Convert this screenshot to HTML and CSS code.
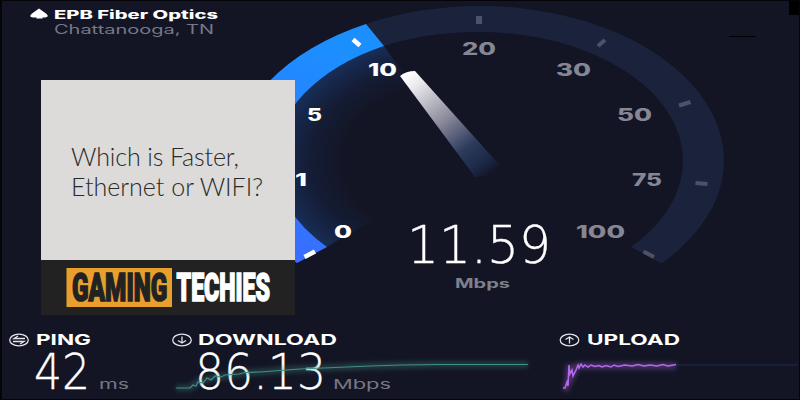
FILE: index.html
```
<!DOCTYPE html>
<html lang="en">
<head>
<meta charset="utf-8">
<title>Which is Faster, Ethernet or WIFI?</title>
<link rel="stylesheet" href="styles.css">
</head>
<body>
<main class="screen">
  <section class="test">
    <svg class="gauge" viewBox="0 0 800 320" role="img" aria-label="Speed gauge">
      <defs>
        <linearGradient id="arc" x1="0" y1="1" x2="0.25" y2="0">
          <stop offset="0" stop-color="#3c69ff"/><stop offset="1" stop-color="#1c8fff"/>
        </linearGradient>
        <linearGradient id="needle" gradientUnits="userSpaceOnUse" x1="408" y1="73" x2="488" y2="176">
          <stop offset="0" stop-color="#fff"/><stop offset=".12" stop-color="#e8e7ec"/><stop offset=".45" stop-color="#8b8b9b"/>
          <stop offset=".73" stop-color="#2c3a5c"/><stop offset=".9" stop-color="#1b2845"/><stop offset="1" stop-color="#141526"/>
        </linearGradient>
        <radialGradient id="glow" gradientUnits="userSpaceOnUse" cx="0" cy="0" r="1" gradientTransform="translate(479 161) scale(204 129)">
          <stop offset=".66" stop-color="#1b4fa8" stop-opacity="0"/><stop offset=".82" stop-color="#1b4fa8" stop-opacity=".12"/><stop offset="1" stop-color="#2361c4" stop-opacity=".32"/>
        </radialGradient>
      </defs>
      <path fill="#1b233c" d="M366 24A245 155 0 0 1 479 6A245 155 0 0 1 724 161A245 155 0 0 1 661.500 263.500L631 247A204 129 0 0 0 683 161A204 129 0 0 0 479 32A204 129 0 0 0 384 46Z"/>
      <path fill="url(#glow)" d="M327 247A204 129 0 0 1 275 161A204 129 0 0 1 384 46L400 69L479 161L343 237Z"/>
      <path fill="url(#arc)" d="M297 263A245 155 0 0 1 234 161A245 155 0 0 1 366 24L384 46A204 129 0 0 0 275 161A204 129 0 0 0 327 247Z"/>
      <g stroke="#fff" stroke-width="4.500">
        <path d="M353 39.500L360 45.500"/><path d="M304.500 257L315 251.500"/>
      </g>
      <g stroke="#4d5268">
        <path stroke-width="6" d="M479 16V24"/><path stroke-width="4" d="M605 40L598 46M690.500 102L679 105.500M707.500 184L695.500 183M643.500 251.500L654 257"/>
      </g>
      <path fill="url(#needle)" d="M400 76Q406 71 415 71L504 170Q490 176 475 177Z"/>
      <g class="tick active">
        <text x="334" y="238" textLength="18">0</text>
        <text x="295" y="186" textLength="12">1</text>
        <text x="307" y="121" textLength="15">5</text>
        <text x="368" y="76" textLength="29">10</text>
      </g>
      <g class="tick">
        <text x="462" y="54.500" textLength="34">20</text>
        <text x="556" y="76" textLength="35">30</text>
        <text x="617" y="121" textLength="35">50</text>
        <text x="632" y="186" textLength="30">75</text>
        <text x="576" y="238" textLength="49">100</text>
      </g>
      <text class="speed" x="407" y="263" textLength="144">11.59</text>
      <text class="speed-unit" x="455" y="288" textLength="55">Mbps</text>
      <path stroke="#000" d="M729 36.500H756"/>
      <path d="M789 0H800V15H789Z"/>
    </svg>
    <header class="provider">
      <svg width="230" height="40" viewBox="0 0 230 40">
        <path fill="#fff" d="M39 8.500L46 13.500Q50 17 45 17.500H42L43 18.500H36L37 17.500H33Q28 17 32 13.500Z"/>
        <text class="isp" x="54" y="18.500" textLength="164">EPB Fiber Optics</text>
        <text class="city" x="54" y="34" textLength="160">Chattanooga, TN</text>
      </svg>
    </header>
  </section>
  <section class="stats">
    <svg class="ping" viewBox="0 0 170 80">
      <g class="ring"><ellipse cx="19" cy="20" rx="9.300" ry="5.800"/><path d="M25 18.500H14L18 16M13 21.500H24L20 24"/></g>
      <text class="name" x="36" y="25" textLength="55">PING</text>
      <text class="number" x="34" y="69" textLength="56">42</text>
      <text class="unit" x="99" y="69" textLength="30">ms</text>
    </svg>
    <svg class="down" viewBox="170 0 370 80">
      <g class="ring"><ellipse cx="182" cy="20" rx="9.300" ry="5.800"/><path d="M182 16.500V23M178 20.500L182 23L186 20.500"/></g>
      <text class="name" x="198" y="25" textLength="139">DOWNLOAD</text>
      <text class="number" x="195" y="69" textLength="131">86.13</text>
      <text class="unit" x="333" y="69" textLength="58">Mbps</text>
      <g class="teal">
        <path class="halo" d="M176 68H190L198 62L212 58L245 53L300 49L370 46L440 44.500H528"/>
        <path d="M176 68H190L193 65L196 66L198 62L203 63L207 58L211 60L215 56L221 57L225 55L239 54L245 52.500L260 52L280 50.500L300 49L335 47.500L370 46L400 45L440 44.500H528"/>
      </g>
    </svg>
    <svg class="up" viewBox="540 0 260 80">
      <g class="ring"><ellipse cx="569.500" cy="20" rx="9.300" ry="5.800"/><path d="M569.500 23.500V17M565.500 19.500L569.500 17L573.500 19.500"/></g>
      <text class="name" x="587" y="25" textLength="93">UPLOAD</text>
      <path stroke="#182039" stroke-width="2" d="M676 45H798"/>
      <g class="purple">
        <path class="halo" d="M563 68H566L568 62L569 45L572 56L577 46H676"/>
        <path d="M563 68H565L567 62L568 66L569 45L570 54L572 50L573 56L576 50L578 45L579 48L581 44L583 47L585 45L588 47L591 45L595 46.500L599 45.500L602 47L606 45.500L611 47L614 45L618 46.500L625 45L632 46L638 44.500L644 46L650 45L657 46L663 44.500L668 46L676 44.500"/>
      </g>
    </svg>
  </section>
  <article class="card">
    <h1 class="title"><span class="line">Which is Faster,</span><br>Ethernet or WIFI?</h1>
    <footer class="brand">
      <svg width="254" height="55" viewBox="0 0 254 55">
        <path fill="#e99f2e" d="M25.500 8H131V47H25.500Z"/>
        <text class="gaming" transform="translate(31 41) scale(.64 1)" textLength="149">GAMING</text>
        <text class="techies" transform="translate(135.500 41) scale(.62 1)" textLength="151">TECHIES</text>
      </svg>
    </footer>
  </article>
</main>
<script>
  // Stretch the glyphs, not the gaps between them.
  document.querySelectorAll("text").forEach(t => t.setAttribute("lengthAdjust", "spacingAndGlyphs"));
</script>
</body>
</html>
```
FILE: styles.css
```
body { margin: 0; background: #000; }
.screen {
  position: relative;
  box-sizing: border-box;
  width: 800px;
  height: 400px;
  overflow: hidden;
  background: #131524;
  display: flex;
  flex-direction: column;
}
.screen::after {
  content: "";
  position: absolute;
  inset: 0;
  border: solid #050509;
  border-width: 1px 1px 1px 2px;
}
svg { display: block; }
.test { display: grid; height: 320px; }
.gauge, .provider { grid-area: 1 / 1; }
.gauge { width: 800px; height: 320px; }
.stats { display: grid; grid-template-columns: 170px 370px 260px; height: 80px; }
.stats svg { width: 100%; height: 80px; }

text { font-family: Inter, "Open Sans", sans-serif; }
.tick { font-size: 17px; font-weight: 800; fill: #868694; }
.active { fill: #fff; }
.speed, .number { font-family: "DejaVu Sans", sans-serif; font-weight: 200; fill: #fff; stroke: #fff; stroke-width: .35; }
.speed { font-size: 52px; }
.number { font-size: 49px; }
.speed-unit { font-size: 12.5px; font-weight: 700; fill: #7f808d; }
.isp { font-size: 11.5px; font-weight: 800; fill: #fff; }
.city { font-size: 12.5px; fill: #777887; }
.name { font-size: 14.5px; font-weight: 700; fill: #fff; }
.unit { font-size: 13px; fill: #777887; }

.ring { fill: none; stroke: #e4e4ea; stroke-width: 1.3; }
.teal, .purple { fill: none; stroke-width: 1.2; }
.teal { stroke: #438e86; }
.purple { stroke: #b469ed; stroke-width: 1.5; }
.halo { stroke-width: 7; opacity: .3; filter: blur(2px); }

.card {
  position: absolute;
  left: 41px;
  top: 80px;
  width: 254px;
  height: 235px;
  display: flex;
  flex-direction: column;
  background: #dcdbd9;
}
.title {
  flex: 1;
  margin: 0;
  padding: 61px 0 0 30px;
  font: 300 25px/30px Lato, sans-serif;
  color: #2a2a2a;
  white-space: nowrap;
}
.line { letter-spacing: -.12px; }
.brand { height: 55px; background: #222; }
.gaming, .techies { font-family: Roboto, sans-serif; font-weight: 900; font-size: 39px; stroke-width: 1.6; }
.gaming { fill: #222; stroke: #222; }
.techies { fill: #fff; stroke: #fff; }
```
